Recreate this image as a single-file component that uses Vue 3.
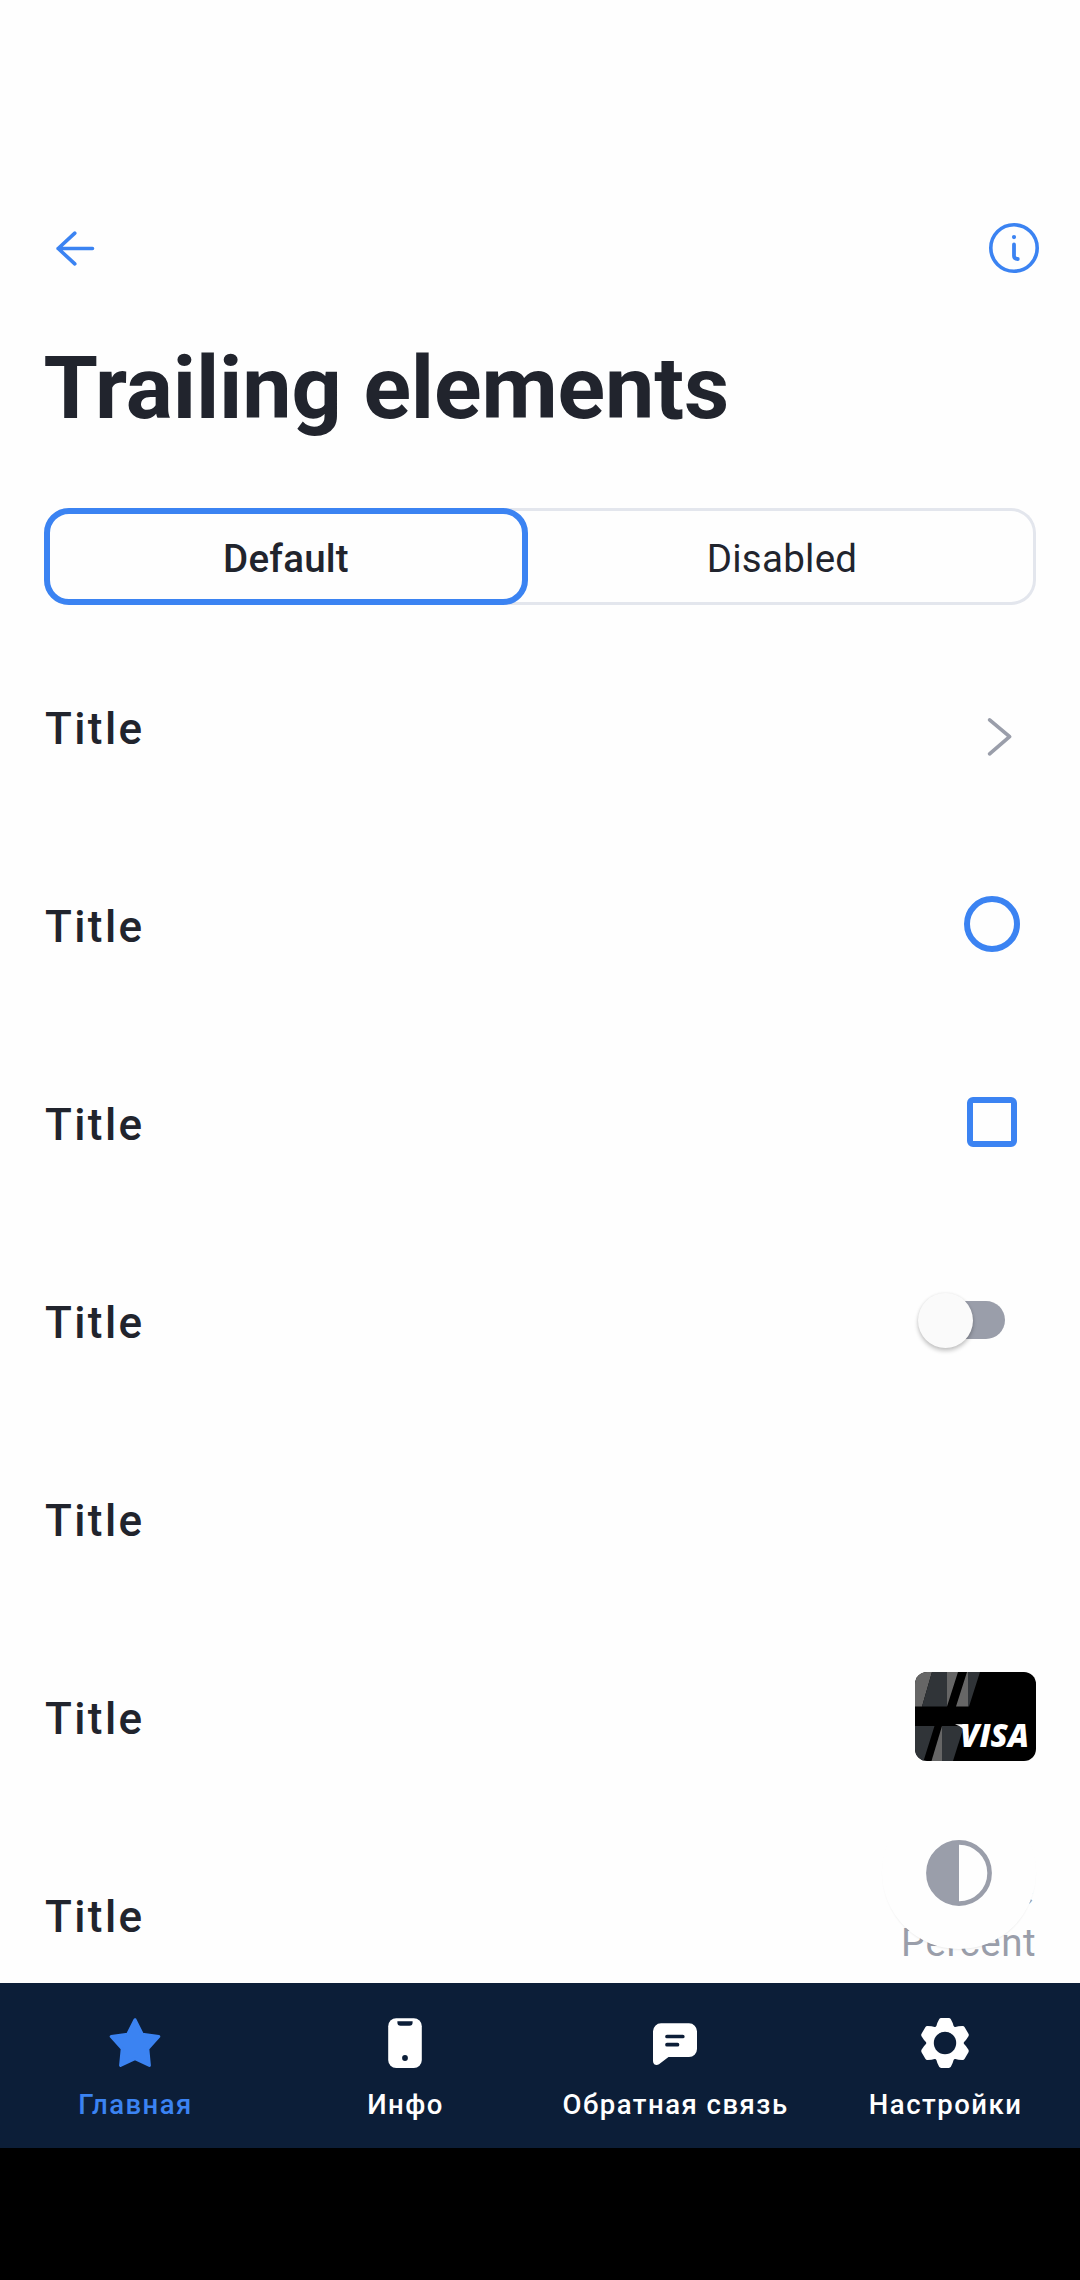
<script setup>
const rows = ['chevron', 'radio', 'checkbox', 'switch', 'none', 'card', 'value']
const teeth = [0, 60, 120, 180, 240, 300]
const tabs = [
  { id: 'home', label: 'Главная', active: true },
  { id: 'info', label: 'Инфо' },
  { id: 'feedback', label: 'Обратная связь' },
  { id: 'settings', label: 'Настройки' },
]
</script>

<template>
  <div class="screen">
    <header class="toolbar">
      <svg class="icon" width="66" height="66" viewBox="0 0 66 66" fill="none">
        <path d="M51.5 33.5H17M33.8 18.1L17.2 33.5l16.6 15.4" stroke="#3b83f2" stroke-width="3.6" stroke-linecap="round" stroke-linejoin="round" />
      </svg>
      <svg class="icon" width="66" height="66" viewBox="0 0 66 66" fill="none" stroke="#3b83f2">
        <circle cx="33" cy="33" r="23.2" stroke-width="3.6" />
        <path d="M33 29.5v11.6q0 2.8 3.8 2.9" stroke-width="3.8" stroke-linecap="round" />
        <circle cx="33" cy="22.1" r="2.1" fill="#3b83f2" stroke="none" />
      </svg>
    </header>

    <h1>Trailing elements</h1>

    <div class="segments">
      <div class="segment selected">Default</div>
      <div class="segment">Disabled</div>
    </div>

    <main class="list">
      <div v-for="kind in rows" :key="kind" class="row">
        <span class="title">Title</span>
        <svg v-if="kind === 'chevron'" class="chevron" width="66" height="66" viewBox="0 0 66 66" fill="none">
          <path d="M23.6 15.9l20 16.8-20 17.2" stroke="#9a9eaa" stroke-width="3.7" stroke-linecap="round" stroke-linejoin="round" />
        </svg>
        <span v-else-if="kind === 'radio'" class="radio"></span>
        <span v-else-if="kind === 'checkbox'" class="checkbox"></span>
        <span v-else-if="kind === 'switch'" class="switch"><i class="knob"></i></span>
        <svg v-else-if="kind === 'card'" class="card" width="121" height="89" viewBox="0 0 121 89">
          <rect width="121" height="89" fill="#000" />
          <path d="M0 0H17L7 34.5H0zM32 0H43L32 34.5zM52 0H53V34.5H41z" fill="#666" />
          <path d="M17 0H32V34.5H7zM53 0H65L54 34.5H53zM0 54H19.5L8.5 89H0z" fill="#303438" />
          <path d="M27 54V89H16.5z" fill="#666" />
          <path d="M27 54H49L38 89H27z" fill="#303438" />
          <path d="M40 52.3H50L54 66Q49 54.5 40 52.3z" fill="#fff" />
          <text x="45" y="75" textLength="69" lengthAdjust="spacingAndGlyphs">VISA</text>
        </svg>
        <span v-else-if="kind === 'value'" class="value"><b>Value</b><span>Percent</span></span>
      </div>
      <div class="fab">
        <svg width="66" height="66" viewBox="0 0 66 66">
          <circle cx="33" cy="33" r="30.6" fill="none" stroke="#9a9eaa" stroke-width="4.6" />
          <path d="M33 1A32 32 0 0 0 33 65z" fill="#9a9eaa" />
        </svg>
      </div>
    </main>

    <nav>
      <div v-for="tab in tabs" :key="tab.id" class="tab" :class="{ active: tab.active }">
        <svg width="66" height="66" viewBox="0 0 66 66">
          <path v-if="tab.id === 'home'" d="M33 9.7L40.3 24.2 56.8 26.5 45.8 38.7 47.4 55.4 33 48.6 18.6 55.4 20.2 38.7 9.2 26.5 25.7 24.2z" fill="currentColor" stroke="currentColor" stroke-width="3" stroke-linejoin="round" />
          <template v-else-if="tab.id === 'info'">
            <rect x="16.2" y="8.2" width="33.6" height="49.8" rx="8" fill="#fff" />
            <path d="M25.4 11.2H40.6V12.5a3.2 3.2 0 0 1-3.2 3.2H28.6a3.2 3.2 0 0 1-3.2-3.2z" fill="#0c1e38" />
            <circle cx="33" cy="48" r="2.9" fill="#0c1e38" />
          </template>
          <template v-else-if="tab.id === 'feedback'">
            <path d="M11 21.3a8 8 0 0 1 8-8H47a8 8 0 0 1 8 8V39a8 8 0 0 1-8 8H26.5L17 54.2Q14.5 55.8 12.2 54.2Q11 53 11 51z" fill="#fff" />
            <path d="M25 26.5H40.8M25 34.7H35.5" stroke="#0c1e38" stroke-width="3.7" stroke-linecap="round" />
          </template>
          <g v-else transform="translate(33 33)" fill="#fff" stroke="#fff" stroke-linejoin="round">
            <circle r="14.5" fill="none" stroke-width="8.4" />
            <path v-for="a in teeth" :key="a" :transform="`rotate(${a})`" d="M-6.6-15.5Q-5.6-19.5-3.8-22.5H3.8Q5.6-19.5 6.6-15.5z" stroke-width="4.8" />
            <circle r="11.2" fill="#0c1e38" stroke="none" />
          </g>
        </svg>
        <span>{{ tab.label }}</span>
      </div>
    </nav>
    <div class="system-bar"></div>
  </div>
</template>

<style>
body { margin: 0; background: #fefefe; }
</style>

<style scoped>
.screen {
  width: 1080px; height: 2280px; overflow: hidden; display: flex; flex-direction: column;
  background: #fefefe; color: #21242d; font-family: Roboto, sans-serif;
}
.toolbar { display: flex; justify-content: space-between; padding: 215px 33px 0 41px; height: 66px; flex: none; }
h1 { margin: 55px 0 0 43.5px; font-size: 88px; line-height: 104px; font-weight: 700; letter-spacing: -0.1px; white-space: nowrap; }
.segments {
  flex: none; box-sizing: border-box; display: flex; margin: 68px 44px 0; height: 97px;
  border-radius: 25px; box-shadow: inset 0 0 0 3px #e3e6ed;
}
.segment { flex: 1; display: flex; align-items: center; justify-content: center; font-size: 38.5px; letter-spacing: .25px; padding-top: 4px; box-sizing: border-box; }
.segment.selected { flex: none; width: 484px; font-weight: 500; border: 6px solid #3b83f2; border-radius: 25px; }
.list { flex: none; position: relative; height: 1356px; margin-top: 22px; overflow: hidden; }
.row { height: 198px; padding: 0 44px 0 45px; display: flex; align-items: center; justify-content: space-between; }
.title { font-size: 44px; line-height: 52px; font-weight: 500; letter-spacing: 2.4px; padding-top: 6px; }
.chevron { margin: 22px 4px 0 0; }
.radio { box-sizing: border-box; width: 56px; height: 56px; border: 6px solid #3b83f2; border-radius: 50%; margin: 0 16px 1px 0; }
.checkbox { box-sizing: border-box; width: 50px; height: 50px; border: 6px solid #3b83f2; border-radius: 6px; margin: 0 19px 1px 0; }
.switch { display: flex; align-items: center; width: 77px; height: 38px; border-radius: 19px; background: #9a9eaa; margin-right: 31px; }
.knob { flex: none; width: 55px; height: 55px; margin-left: -10.5px; border-radius: 50%; background: #fafafa; box-shadow: 0 3px 4px rgba(0,0,0,.22), 0 0 3px rgba(0,0,0,.08); }
.card { border-radius: 12px; }
.card text { font: italic 800 32px "Open Sans", sans-serif; fill: #fff; }
.value { display: flex; flex-direction: column; align-items: flex-end; color: #9a9eaa; font-size: 38.5px; letter-spacing: .5px; line-height: 49px; padding-top: 1px; }
.value b { font-size: 44px; font-weight: 400; line-height: 55px; letter-spacing: 2px; }
.fab {
  position: absolute; left: 882px; top: 1168px; width: 154px; height: 154px; border-radius: 50%;
  background: #fefefe; display: flex; align-items: center; justify-content: center; box-shadow: 0 2px 2px -1px rgba(0,0,0,.08);
}
.fab svg { margin-top: 2px; }
nav { flex: none; display: flex; height: 165px; background: #0c1e38; }
.tab { width: 270px; display: flex; flex-direction: column; align-items: center; padding-top: 27px; box-sizing: border-box; color: #fff; font-size: 27.5px; line-height: 33px; font-weight: 500; letter-spacing: 1.5px; white-space: nowrap; }
.tab.active { color: #3b83f2; }
.tab span { margin-top: 12px; padding-left: 1.2px; }
.system-bar { flex: 1; background: #000; }
</style>
